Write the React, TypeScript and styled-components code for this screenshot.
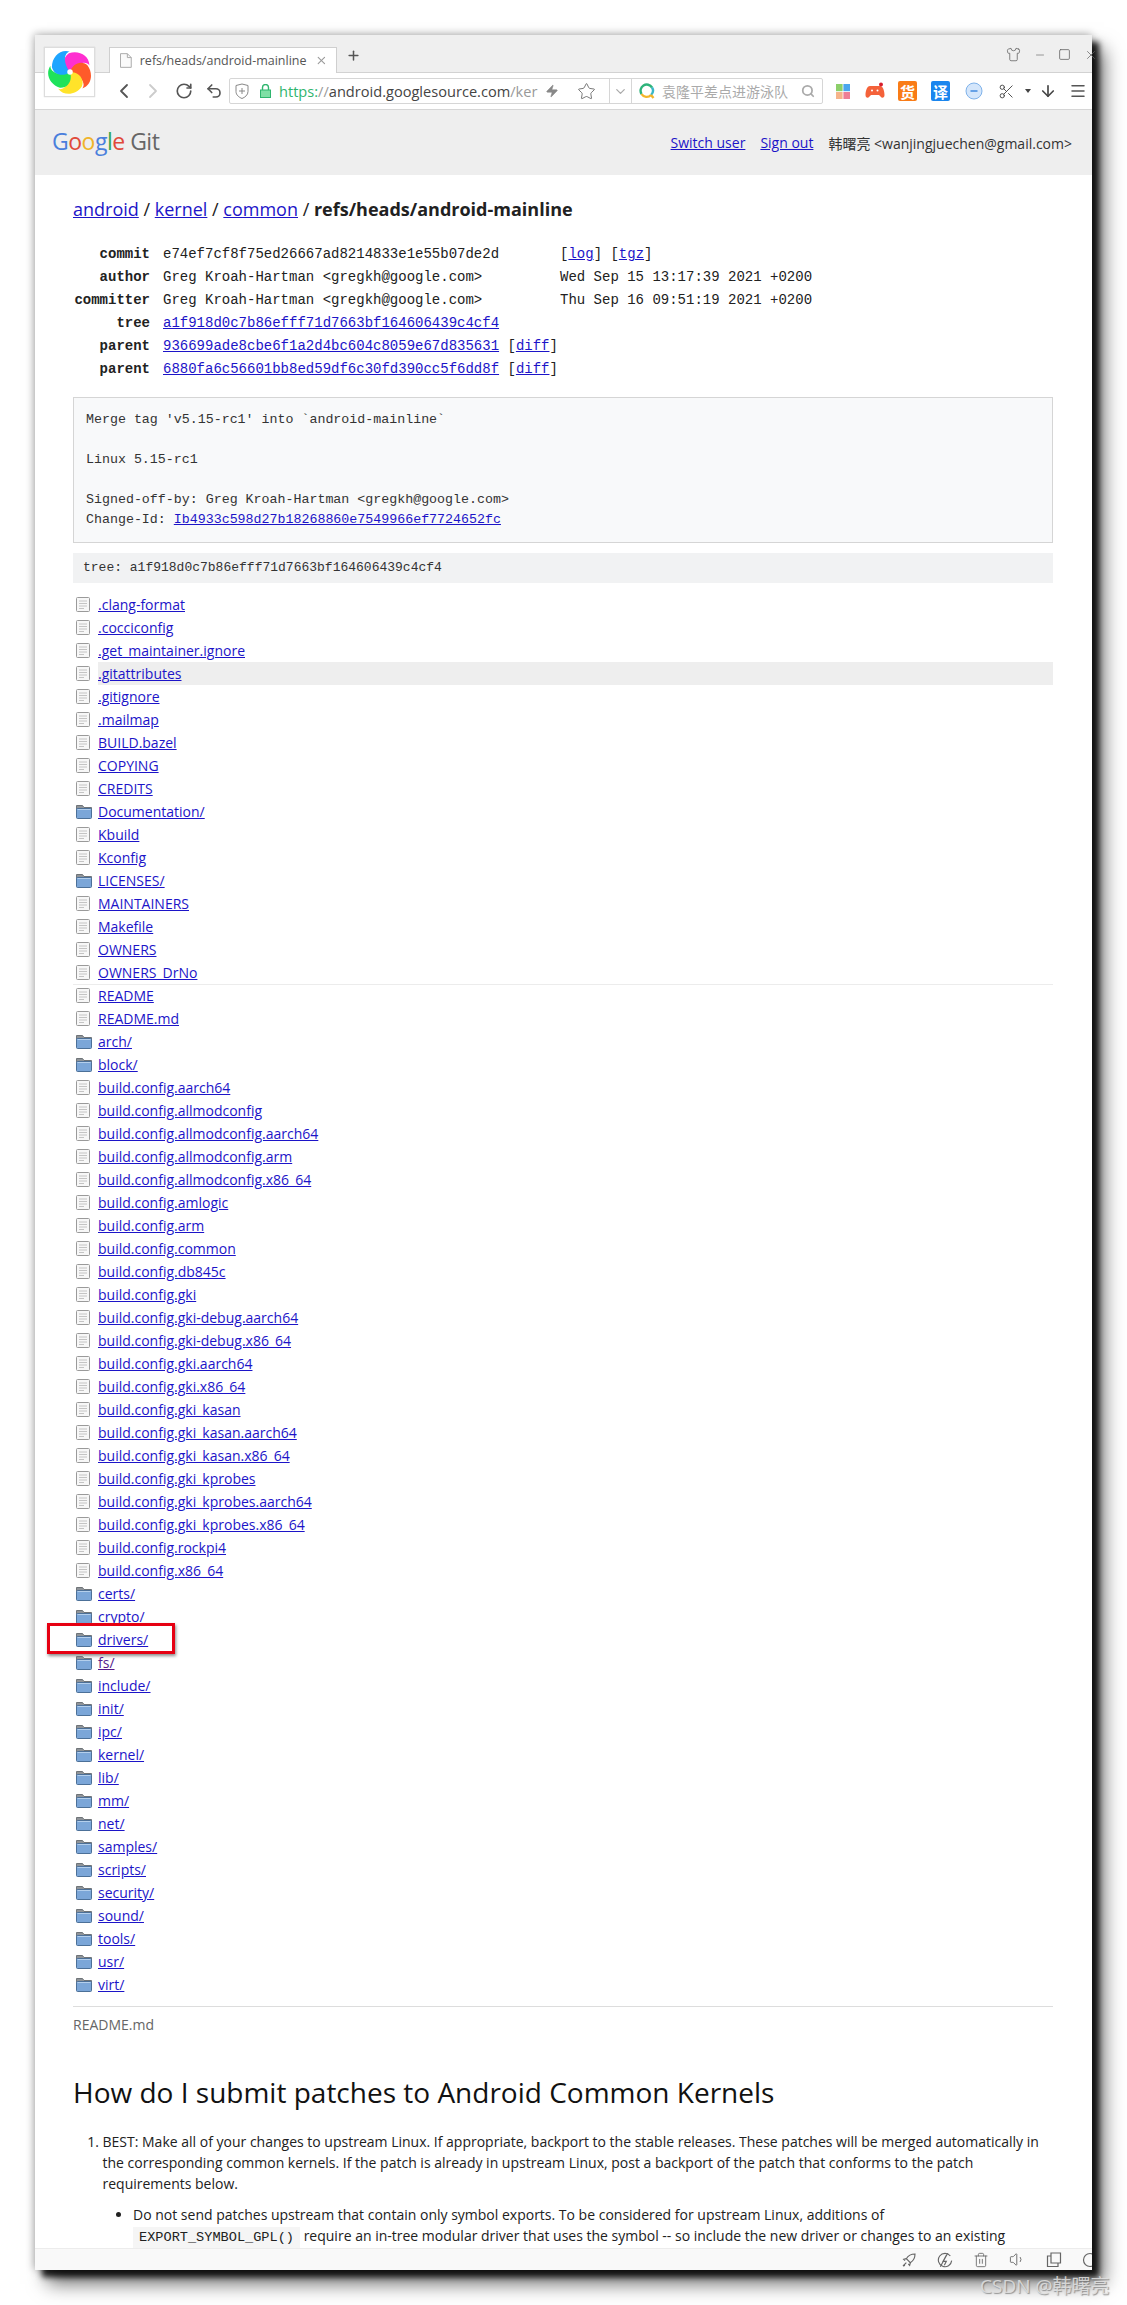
import styled, { createGlobalStyle } from "styled-components";
import {
  ArrowDown,
  ChevronDown,
  ChevronLeft,
  ChevronRight,
  Menu,
  Minus,
  Plus,
  RotateCw,
  Scissors,
  Search,
  Shirt,
  Square,
  Star,
  Trash2,
  Undo2,
  Volume1,
  X,
  Zap,
} from "lucide-react";

const GlobalStyle = createGlobalStyle`
  html, body {
    margin: 0;
    padding: 0;
    background: #fff;
  }
  body {
    font-family: "Open Sans", "Noto Sans CJK SC", sans-serif;
    font-size: 14px;
    color: #212121;
  }
`;

const Page = styled.div`
  position: relative;
  width: 1127px;
  height: 2305px;
  padding: 35px 0 0 35px;
  box-sizing: border-box;
  overflow: hidden;
`;

const Browser = styled.div`
  position: relative;
  width: 1057px;
  height: 2235px;
  display: flex;
  flex-direction: column;
  background: #fff;
  box-shadow: -1px -1px 8px rgba(0, 0, 0, 0.3), 7px 7px 6px rgba(0, 0, 0, 0.85), 12px 14px 18px rgba(0, 0, 0, 0.55);
`;

const TabStrip = styled.div`
  height: 38px;
  flex: none;
  box-sizing: border-box;
  padding: 12px 0 0 74px;
  display: flex;
  align-items: flex-start;
  background: #efefef;
  border-bottom: 1px solid #d2d2d2;
`;

const Tab = styled.div`
  width: 228px;
  height: 26px;
  box-sizing: border-box;
  padding: 0 8px 0 10px;
  display: flex;
  align-items: center;
  background: #fff;
  border: 1px solid #cfcfcf;
  border-bottom: none;
  color: #555;
  font-size: 12.5px;
  white-space: nowrap;
`;

const TabTitle = styled.span`
  margin-left: 8px;
  width: 172px;
`;

const NewTab = styled.div`
  margin: 1px 0 0 9px;
  color: #555;
  display: flex;
`;

const WindowControls = styled.div`
  margin-left: auto;
  margin-right: -6px;
  width: 92px;
  display: flex;
  align-items: center;
  justify-content: space-between;
  color: #666;
  overflow: hidden;
`;

const Logo = styled.div`
  position: absolute;
  left: 9px;
  top: 12px;
  width: 51px;
  height: 50px;
  box-sizing: border-box;
  display: flex;
  align-items: center;
  justify-content: center;
  background: #fff;
  border: 1px solid #ddd;
  box-shadow: 0 0 1px rgba(0, 0, 0, 0.2);
`;

const Toolbar = styled.div`
  height: 37px;
  flex: none;
  box-sizing: border-box;
  padding-left: 75px;
  display: flex;
  align-items: center;
  background: #fff;
  border-bottom: 1px solid #d6d6d6;
  overflow: hidden;
`;

const Slot = styled.div<{ $w: number; $color?: string }>`
  width: ${(p) => p.$w}px;
  flex: none;
  display: flex;
  align-items: center;
  justify-content: center;
  color: ${(p) => p.$color || "#555"};
`;

const UrlBar = styled.div`
  width: 594px;
  height: 26px;
  flex: none;
  box-sizing: border-box;
  margin-left: 1px;
  display: flex;
  align-items: center;
  border: 1px solid #d6d6d6;
  border-radius: 2px;
`;

const UrlText = styled.div`
  width: 256px;
  flex: none;
  white-space: nowrap;
  font-size: 14.6px;
  color: #999;
`;

const UrlScheme = styled.span`
  color: #2fb56e;
`;

const UrlHost = styled.span`
  color: #444;
`;

const BarDivider = styled.div`
  width: 1px;
  height: 100%;
  flex: none;
  background: #d6d6d6;
`;

const SearchHint = styled.div`
  width: 128px;
  flex: none;
  font-family: "Noto Sans CJK SC", sans-serif;
  font-size: 14px;
  color: #aaa;
  white-space: nowrap;
`;

const ExtTile = styled.div<{ $bg: string }>`
  width: 19px;
  height: 20px;
  display: flex;
  align-items: center;
  justify-content: center;
  border-radius: 2px;
  background: ${(p) => p.$bg};
  color: #fff;
  font-family: "Noto Sans CJK SC", sans-serif;
  font-size: 15px;
  font-weight: 700;
  line-height: 1;
`;

const Header = styled.div`
  height: 65px;
  flex: none;
  box-sizing: border-box;
  padding: 0 20px 0 17px;
  display: flex;
  align-items: center;
  background: #eee;
`;

const Brand = styled.div`
  font-family: "Open Sans", sans-serif;
  font-size: 23px;
  letter-spacing: -0.5px;
  color: #666;
  margin-top: -4px;
`;

const BrandLetter = styled.span<{ $c: string }>`
  color: ${(p) => p.$c};
`;

const Account = styled.div`
  margin-left: auto;
  display: flex;
  align-items: center;
  gap: 15px;
  font-size: 14px;
  color: #333;
`;

const Link = styled.a<{ $visited?: boolean }>`
  color: ${(p) => (p.$visited ? "#551a8b" : "#1c14c8")};
  text-decoration: underline;
`;

const Content = styled.div`
  flex: 1;
  min-height: 0;
  overflow: hidden;
  padding: 22px 39px 0 38px;
`;

const Breadcrumb = styled.div`
  height: 24px;
  font-size: 18px;
  line-height: 24px;
  white-space: nowrap;
`;

const CommitTable = styled.div`
  margin-top: 22px;
  display: grid;
  grid-template-columns: 77px 384px auto;
  column-gap: 13px;
  grid-auto-rows: 23px;
  font-family: "Liberation Mono", monospace;
  font-size: 14px;
  line-height: 23px;
  white-space: pre;
`;

const CommitLabel = styled.div`
  text-align: right;
  font-weight: 700;
  color: #222;
`;

const Message = styled.pre`
  margin: 16px 0 0;
  padding: 12px;
  background: #f8f9fa;
  border: 1px solid #d5d5d5;
  font-family: "Liberation Mono", monospace;
  font-size: 13.3px;
  line-height: 20px;
  color: #333;
`;

const TreeBar = styled.div`
  margin-top: 10px;
  height: 30px;
  box-sizing: border-box;
  padding-left: 10px;
  background: #f1f2f3;
  font-family: "Liberation Mono", monospace;
  font-size: 13px;
  line-height: 30px;
  color: #333;
`;

const FileList = styled.div`
  margin-top: 10px;
`;

const Row = styled.div<{ $rule?: boolean }>`
  position: relative;
  height: 23px;
  display: grid;
  grid-template-columns: 25px 1fr;
  align-items: center;
  box-shadow: ${(p) => (p.$rule ? "0 1px 0 #ececec" : "none")};
`;

const RowIcon = styled.div`
  padding-left: 3px;
  display: flex;
  align-items: center;
`;

const RowName = styled.div<{ $hover?: boolean }>`
  height: 23px;
  line-height: 23px;
  font-size: 14px;
  background: ${(p) => (p.$hover ? "#eee" : "transparent")};
`;

const Marker = styled.div`
  position: absolute;
  left: -26px;
  top: -5px;
  width: 128px;
  height: 31px;
  box-sizing: border-box;
  border: 3px solid #e60012;
  box-shadow: 1px 2px 3px rgba(0, 0, 0, 0.45);
`;

const ReadmeLabel = styled.div`
  margin-top: 10px;
  padding-top: 8px;
  border-top: 1px solid #ddd;
  font-size: 14px;
  line-height: 20px;
  color: #666;
`;

const ReadmeTitle = styled.h2`
  margin: 37px 0 0;
  font-size: 28px;
  font-weight: 400;
  line-height: 40px;
  color: #111;
`;

const Steps = styled.ol`
  margin: 19px 0 0;
  padding-left: 29.5px;
  font-size: 14px;
  line-height: 21px;
`;

const Notes = styled.ul`
  margin: 10px 0 0;
  padding-left: 30.5px;
  list-style: disc;
`;

const Code = styled.code`
  padding: 3px 6px;
  background: #f5f5f5;
  font-family: "Liberation Mono", monospace;
  font-size: 13.6px;
`;

const StatusBar = styled.div`
  height: 22px;
  flex: none;
  box-sizing: border-box;
  padding-right: 0;
  display: flex;
  align-items: center;
  justify-content: flex-end;
  gap: 20px;
  background: #f9f9f9;
  border-top: 1px solid #ececec;
  color: #666;
  overflow: hidden;
`;

const Watermark = styled.div`
  position: absolute;
  left: 980px;
  top: 2272px;
  font-family: "Open Sans", "Noto Sans CJK SC", sans-serif;
  font-size: 19px;
  line-height: 28px;
  color: rgba(225, 225, 225, 0.85);
  text-shadow: 1px 1px 1px rgba(90, 90, 90, 0.6);
  white-space: nowrap;
`;

const FileIcon = () => (
  <svg width="14" height="15" viewBox="0 0 14 15">
    <rect x="0.5" y="0.5" width="13" height="14" rx="1" fill="#f7f7f7" stroke="#9a9a9a" />
    <path d="M3 4h8M3 6.5h8M3 9h8M3 11.5h5" stroke="#c4c4c4" />
  </svg>
);

const FolderIcon = () => (
  <svg width="16" height="15" viewBox="0 0 16 15">
    <path d="M0.5 13V1.5h6l1.5 2h7.5V13z" fill="#8f9499" stroke="#6f7478" />
    <rect x="0.5" y="4.5" width="15" height="10" rx="1" fill="#7ba6d8" stroke="#4c7098" />
    <path d="M1.5 5.5h13" stroke="#b4cfec" />
  </svg>
);

const blades = ["#ff2fd0", "#ff5a2a", "#ffe32a", "#1fe25a", "#1ea5ff"];

const BrowserLogo = () => (
  <svg width="44" height="46" viewBox="0 0 48 48">
    {blades.map((c, i) => (
      <path
        key={c}
        d="M24 24C16 20 13 10 20 4C30 -1 42 3 44 14C40 9 30 12 24 24Z"
        fill={c}
        transform={`rotate(${i * 72 + 8} 24 24)`}
      />
    ))}
    <circle cx="24" cy="24" r="3" fill="#fff" />
  </svg>
);

const ShieldIcon = () => (
  <svg width="14" height="17" viewBox="0 0 14 17" fill="none" stroke="#888">
    <path d="M1 2.5L7 1l6 1.5v6c0 3.5-3 5.8-6 7-3-1.2-6-3.5-6-7z" />
    <path d="M7 5v6M4 8h6" />
  </svg>
);

const LockIcon = () => (
  <svg width="11" height="14" viewBox="0 0 11 14">
    <path d="M2.5 6V3.5a3 3 0 0 1 6 0V6" fill="none" stroke="#2fb56e" strokeWidth="1.4" />
    <rect x="0.5" y="6" width="10" height="7.5" fill="#7fe0a5" stroke="#2fb56e" />
  </svg>
);

const SearchRing = () => (
  <svg width="16" height="17" viewBox="0 0 16 17" fill="none" strokeWidth="2.4">
    <path d="M2.5 11A6 6 0 0 1 13 4.5" stroke="#2db37a" />
    <path d="M13 4.5A6 6 0 0 1 12 12" stroke="#38b7c9" />
    <path d="M12 12A6 6 0 0 1 2.5 11" stroke="#f3b52a" />
    <path d="M12 12l2.5 3" stroke="#f3b52a" />
  </svg>
);

const TilesIcon = () => (
  <svg width="14" height="15" viewBox="0 0 14 15">
    <rect width="6.6" height="7.2" fill="#8ccf6a" />
    <rect x="7.4" width="6.6" height="7.2" fill="#4ba6ee" />
    <rect y="8" width="6.6" height="7.2" fill="#f6b48a" />
    <rect x="7.4" y="8" width="6.6" height="7.2" fill="#ee7f95" />
  </svg>
);

const GameIcon = () => (
  <svg width="20" height="18" viewBox="0 0 20 18">
    <path d="M5 4h10c3 0 4.5 5 4.5 9 0 3-2.5 3.5-4 1.5L14 13H6l-1.5 1.5c-1.5 2-4 1.500-4-1.500C.5 9 2 4 5 4z" fill="#f4623a" />
    <circle cx="16" cy="2.500" r="2" fill="#d81e2c" />
    <circle cx="7" cy="8.500" r="1" fill="#fff" />
    <circle cx="12.500" cy="8.500" r="1" fill="#fff" />
  </svg>
);

const MinusBadge = () => (
  <svg width="18" height="18" viewBox="0 0 18 18">
    <circle cx="9" cy="9" r="8" fill="#d4e6fb" stroke="#7fb2ea" />
    <path d="M5.500 9h7" stroke="#4a90e2" strokeWidth="1.600" />
  </svg>
);

const SmallCaret = () => (
  <svg width="6" height="4" viewBox="0 0 6 4">
    <path d="M0 0h6L3 4z" fill="#444" />
  </svg>
);

const PinIcon = () => (
  <svg width="16" height="16" viewBox="0 0 24 24" fill="none" stroke="#666" strokeWidth="1.700">
    <path d="M21 3c-6 0-10 2-13 7l6 6c5-3 7-7 7-13z" />
    <path d="M8 10l-4 1 2 2M14 16l-1 4-2-2M8 16l-5 5M6 20l-2 1" />
  </svg>
);

const BoostIcon = () => (
  <svg width="16" height="16" viewBox="0 0 24 24" fill="none" stroke="#666" strokeWidth="1.700">
    <path d="M20 6A10 10 0 1 0 22 13" />
    <path d="M14 5l-5 9h5l-3 6M16 2L5 22" />
  </svg>
);

const PanelIcon = () => (
  <svg width="16" height="16" viewBox="0 0 16 16" fill="none" stroke="#666" strokeWidth="1.200">
    <path d="M5 1h9.500v10H5zM5 4H1.500v10.500H12V11" />
  </svg>
);

const names = [
  ".clang-format", ".cocciconfig", ".get_maintainer.ignore", ".gitattributes", ".gitignore", ".mailmap",
  "BUILD.bazel", "COPYING", "CREDITS", "Documentation/", "Kbuild", "Kconfig", "LICENSES/", "MAINTAINERS",
  "Makefile", "OWNERS", "OWNERS_DrNo", "README", "README.md", "arch/", "block/",
  "build.config.aarch64", "build.config.allmodconfig", "build.config.allmodconfig.aarch64",
  "build.config.allmodconfig.arm", "build.config.allmodconfig.x86_64", "build.config.amlogic",
  "build.config.arm", "build.config.common", "build.config.db845c", "build.config.gki",
  "build.config.gki-debug.aarch64", "build.config.gki-debug.x86_64", "build.config.gki.aarch64",
  "build.config.gki.x86_64", "build.config.gki_kasan", "build.config.gki_kasan.aarch64",
  "build.config.gki_kasan.x86_64", "build.config.gki_kprobes", "build.config.gki_kprobes.aarch64",
  "build.config.gki_kprobes.x86_64", "build.config.rockpi4", "build.config.x86_64",
  "certs/", "crypto/", "drivers/", "fs/", "include/", "init/", "ipc/", "kernel/", "lib/", "mm/", "net/",
  "samples/", "scripts/", "security/", "sound/", "tools/", "usr/", "virt/",
];

const App = () => {
  return (
    <Page>
      <GlobalStyle />
      <Browser>
        <TabStrip>
          <Tab>
            <svg width="12" height="15" viewBox="0 0 12 15" fill="#fafafa" stroke="#aaa">
              <path d="M.5.5h7l4 4v10H.5z" />
              <path d="M7.500.5v4h4" fill="none" />
            </svg>
            <TabTitle>refs/heads/android-mainline</TabTitle>
            <X size={13} color="#999" style={{ marginLeft: 7 }} />
          </Tab>
          <NewTab>
            <Plus size={15} strokeWidth={2.4} />
          </NewTab>
          <WindowControls>
            <Shirt size={15} strokeWidth={1.3} />
            <Minus size={12} strokeWidth={1.3} />
            <Square size={13} strokeWidth={1.5} />
            <X size={14} strokeWidth={1.3} />
          </WindowControls>
        </TabStrip>
        <Logo>
          <BrowserLogo />
        </Logo>
        <Toolbar>
          <Slot $w={28}><ChevronLeft size={24} strokeWidth={1.8} /></Slot>
          <Slot $w={30} $color="#ccc"><ChevronRight size={24} strokeWidth={1.8} /></Slot>
          <Slot $w={32}><RotateCw size={18} strokeWidth={2.2} /></Slot>
          <Slot $w={28}><Undo2 size={18} strokeWidth={2.2} /></Slot>
          <UrlBar>
            <Slot $w={24}><ShieldIcon /></Slot>
            <Slot $w={22}><LockIcon /></Slot>
            <Slot $w={3} />
            <UrlText>
              <UrlScheme>https:</UrlScheme>//<UrlHost>android.googlesource.com</UrlHost>/ker
            </UrlText>
            <Slot $w={34} $color="#888"><Zap size={14} fill="#888" strokeWidth={1} /></Slot>
            <Slot $w={34}><Star size={19} strokeWidth={1} /></Slot>
            <Slot $w={6} />
            <BarDivider />
            <Slot $w={21} $color="#aaa"><ChevronDown size={15} strokeWidth={2} /></Slot>
            <BarDivider />
            <Slot $w={30}><SearchRing /></Slot>
            <SearchHint>袁隆平差点进游泳队</SearchHint>
            <Slot $w={36} $color="#aaa"><Search size={14} strokeWidth={3} /></Slot>
          </UrlBar>
          <Slot $w={3} />
          <Slot $w={33}><TilesIcon /></Slot>
          <Slot $w={32}><GameIcon /></Slot>
          <Slot $w={33}><ExtTile $bg="#f97c17">货</ExtTile></Slot>
          <Slot $w={33}><ExtTile $bg="#1a86ee">译</ExtTile></Slot>
          <Slot $w={33}><MinusBadge /></Slot>
          <Slot $w={33} $color="#444"><Scissors size={17} strokeWidth={1.3} /></Slot>
          <Slot $w={9}><SmallCaret /></Slot>
          <Slot $w={32} $color="#444"><ArrowDown size={18} strokeWidth={2.2} /></Slot>
          <Slot $w={28} $color="#555"><Menu size={18} strokeWidth={2} /></Slot>
        </Toolbar>
        <Header>
          <Brand>
            <BrandLetter $c="#4a7fdc">G</BrandLetter>
            <BrandLetter $c="#e0493a">o</BrandLetter>
            <BrandLetter $c="#f0b429">o</BrandLetter>
            <BrandLetter $c="#4a7fdc">g</BrandLetter>
            <BrandLetter $c="#34a853">l</BrandLetter>
            <BrandLetter $c="#e0493a">e</BrandLetter> Git
          </Brand>
          <Account>
            <Link>Switch user</Link>
            <Link>Sign out</Link>
            <span>韩曙亮 &lt;wanjingjuechen@gmail.com&gt;</span>
          </Account>
        </Header>
        <Content>
          <Breadcrumb>
            <Link>android</Link> / <Link>kernel</Link> / <Link>common</Link> / <strong>refs/heads/android-mainline</strong>
          </Breadcrumb>
          <CommitTable>
            <CommitLabel>commit</CommitLabel>
            <div>e74ef7cf8f75ed26667ad8214833e1e55b07de2d</div>
            <div>[<Link>log</Link>] [<Link>tgz</Link>]</div>
            <CommitLabel>author</CommitLabel>
            <div>Greg Kroah-Hartman &lt;gregkh@google.com&gt;</div>
            <div>Wed Sep 15 13:17:39 2021 +0200</div>
            <CommitLabel>committer</CommitLabel>
            <div>Greg Kroah-Hartman &lt;gregkh@google.com&gt;</div>
            <div>Thu Sep 16 09:51:19 2021 +0200</div>
            <CommitLabel>tree</CommitLabel>
            <div><Link>a1f918d0c7b86efff71d7663bf164606439c4cf4</Link></div>
            <div />
            <CommitLabel>parent</CommitLabel>
            <div><Link>936699ade8cbe6f1a2d4bc604c8059e67d835631</Link> [<Link>diff</Link>]</div>
            <div />
            <CommitLabel>parent</CommitLabel>
            <div><Link>6880fa6c56601bb8ed59df6c30fd390cc5f6dd8f</Link> [<Link>diff</Link>]</div>
            <div />
          </CommitTable>
          <Message>
            {"Merge tag 'v5.15-rc1' into `android-mainline`\n\nLinux 5.15-rc1\n\nSigned-off-by: Greg Kroah-Hartman <gregkh@google.com>\nChange-Id: "}
            <Link>Ib4933c598d27b18268860e7549966ef7724652fc</Link>
          </Message>
          <TreeBar>tree: a1f918d0c7b86efff71d7663bf164606439c4cf4</TreeBar>
          <FileList>
            {names.map((name) => (
              <Row key={name} $rule={name === "OWNERS_DrNo"}>
                <RowIcon>{name.endsWith("/") ? <FolderIcon /> : <FileIcon />}</RowIcon>
                <RowName $hover={name === ".gitattributes"}>
                  <Link $visited={name === "fs/"}>{name}</Link>
                </RowName>
                {name === "drivers/" && <Marker />}
              </Row>
            ))}
          </FileList>
          <ReadmeLabel>README.md</ReadmeLabel>
          <ReadmeTitle>How do I submit patches to Android Common Kernels</ReadmeTitle>
          <Steps>
            <li>
              BEST: Make all of your changes to upstream Linux. If appropriate, backport to the stable releases. These patches will be merged automatically in the corresponding common kernels. If the patch is already in upstream Linux, post a backport of the patch that conforms to the patch requirements below.
              <Notes>
                <li>
                  Do not send patches upstream that contain only symbol exports. To be considered for upstream Linux, additions of <Code>EXPORT_SYMBOL_GPL()</Code> require an in-tree modular driver that uses the symbol -- so include the new driver or changes to an existing
                </li>
              </Notes>
            </li>
          </Steps>
        </Content>
        <StatusBar>
          <PinIcon />
          <BoostIcon />
          <Trash2 size={16} strokeWidth={1.3} />
          <Volume1 size={17} strokeWidth={1.3} />
          <PanelIcon />
          <svg width="10" height="16" viewBox="0 0 10 16" fill="none" stroke="#666" strokeWidth="1.200">
            <circle cx="8" cy="8" r="6.500" />
          </svg>
        </StatusBar>
      </Browser>
      <Watermark>CSDN @韩曙亮</Watermark>
    </Page>
  );
};

export default App;
